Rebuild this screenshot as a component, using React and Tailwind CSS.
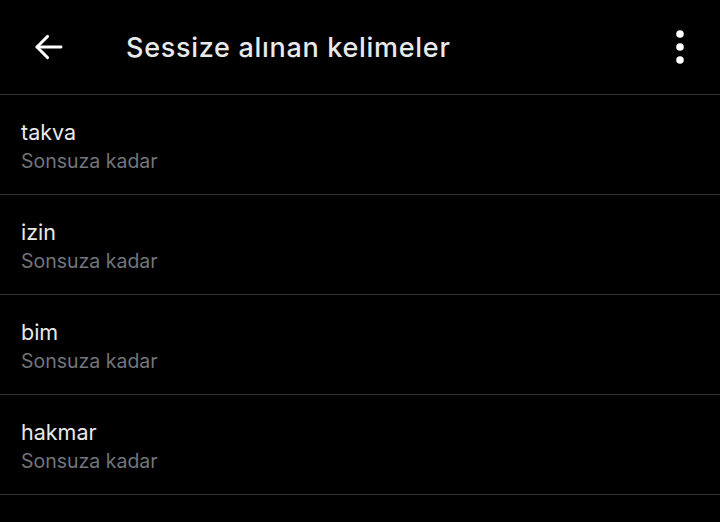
import React from 'react';

const words = ['takva', 'izin', 'bim', 'hakmar'];

export default function App() {
  return (
    <div className="w-[720px] h-[522px] bg-black text-[#e7e9ea] overflow-hidden" style={{ fontFamily: 'Inter, "Noto Sans", sans-serif' }}>
      <header className="h-[95px] flex items-center border-b border-[#2f3336]">
        <div className="w-[98px] flex items-center pl-[32px]">
          <svg width="34" height="34" viewBox="0 0 24 24" fill="none" stroke="#ffffff" strokeWidth="2" strokeLinecap="round" strokeLinejoin="round">
            <path d="M20.5 12H3.5" />
            <path d="M11 4.5L3.5 12l7.5 7.5" />
          </svg>
        </div>
        <h1 className="flex-1 pl-[28px] pt-[2px] text-[27px] font-medium tracking-[0.7px] text-[#e7e9ea]">Sessize alınan kelimeler</h1>
        <div className="w-[70px] flex justify-center pr-[10px]">
          <svg width="10" height="36" viewBox="0 0 10 36" fill="#ffffff">
            <circle cx="5" cy="5" r="3.8" />
            <circle cx="5" cy="18" r="3.8" />
            <circle cx="5" cy="31" r="3.8" />
          </svg>
        </div>
      </header>
      <ul>
        {words.map((w) => (
          <li key={w} className="h-[100px] border-b border-[#2f3336] px-[21px] pt-[4px] flex flex-col justify-center">
            <div className="text-[21.5px] leading-[29px] text-[#e7e9ea]">{w}</div>
            <div className="text-[19.5px] leading-[29px] text-[#71767b]">Sonsuza kadar</div>
          </li>
        ))}
      </ul>
    </div>
  );
}
